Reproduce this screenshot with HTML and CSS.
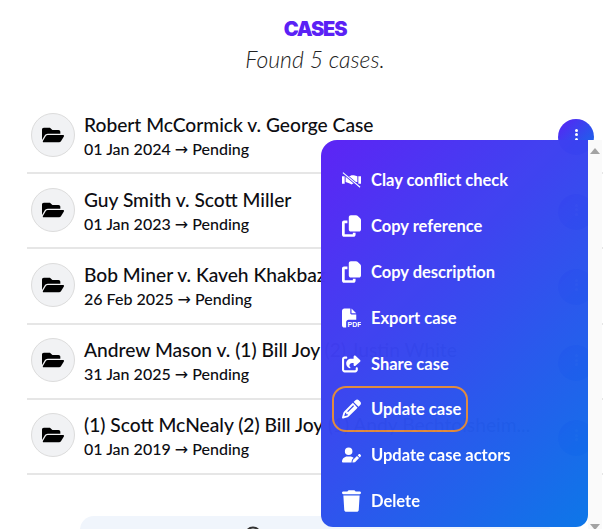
FILE: index.html
```html
<!DOCTYPE html>
<html lang="en">
<head>
<meta charset="utf-8">
<title>Cases</title>
<link rel="stylesheet" href="styles.css">
</head>
<body>
<svg class="defs" aria-hidden="true"><defs>
<symbol id="folder" viewBox="0 0 576 512"><path d="M572.694 292.093L500.27 416.248A63.997 63.997 0 0 1 444.989 448H45.025c-18.523 0-30.064-20.093-20.731-36.093l72.424-124.155A64 64 0 0 1 152 256h399.964c18.523 0 30.064 20.093 20.73 36.093zM152 224h328v-48c0-26.51-21.49-48-48-48H272l-64-64H48C21.49 64 0 85.49 0 112v278.046l69.077-118.418C86.214 242.25 117.989 224 152 224z"/></symbol>
<symbol id="copy" viewBox="0 0 448 512"><path d="M208 0H332.1c12.7 0 24.9 5.1 33.9 14.1l67.9 67.9c9 9 14.1 21.2 14.1 33.9V336c0 26.5-21.5 48-48 48H208c-26.5 0-48-21.5-48-48V48c0-26.5 21.5-48 48-48zM48 128h80v64H64V448H256V416h64v48c0 26.5-21.5 48-48 48H48c-26.5 0-48-21.5-48-48V176c0-26.5 21.5-48 48-48z"/></symbol>
</defs></svg>
<main class="page">
  <header class="head">
    <h1 class="title">CASES</h1>
    <p class="found">Found 5 cases.</p>
  </header>
  <ul class="rows">
    <li class="row">
      <span class="avatar"><svg class="folder"><use href="#folder"/></svg></span>
      <div class="info"><div class="name">Robert McCormick v. George Case</div><div class="meta">01 Jan 2024 <span class="arrow">→</span> Pending</div></div>
      <span class="more"><i></i><i></i><i></i></span>
    </li>
    <li class="row">
      <span class="avatar"><svg class="folder"><use href="#folder"/></svg></span>
      <div class="info"><div class="name">Guy Smith v. Scott Miller</div><div class="meta">01 Jan 2023 <span class="arrow">→</span> Pending</div></div>
      <span class="more"><i></i><i></i><i></i></span>
    </li>
    <li class="row">
      <span class="avatar"><svg class="folder"><use href="#folder"/></svg></span>
      <div class="info"><div class="name">Bob Miner v. Kaveh Khakbaz</div><div class="meta">26 Feb 2025 <span class="arrow">→</span> Pending</div></div>
      <span class="more"><i></i><i></i><i></i></span>
    </li>
    <li class="row">
      <span class="avatar"><svg class="folder"><use href="#folder"/></svg></span>
      <div class="info"><div class="name">Andrew Mason v. (1) Bill Joy (2) Justin White</div><div class="meta">31 Jan 2025 <span class="arrow">→</span> Pending</div></div>
      <span class="more"><i></i><i></i><i></i></span>
    </li>
    <li class="row">
      <span class="avatar"><svg class="folder"><use href="#folder"/></svg></span>
      <div class="info"><div class="name">(1) Scott McNealy (2) Bill Joy (1) Andy Bechtolsheim...</div><div class="meta">01 Jan 2019 <span class="arrow">→</span> Pending</div></div>
      <span class="more"><i></i><i></i><i></i></span>
    </li>
  </ul>
  <div class="loader"><svg class="loader-icon" viewBox="0 0 20 20"><circle cx="10" cy="10" r="7.5"/></svg></div>
</main>
<div class="popup">
  <nav class="menu">
    <a class="item"><svg class="ico" viewBox="0 0 640 512"><path d="M0 128h90v256H0zM550 128h90v256h-90zM122 128h136l62-32h80l118 32v192h-58L320 404l-60-30-138-54z"/><path class="gap" d="M30 10L610 500"/><path class="slash" d="M30 10L610 500"/></svg><span>Clay conflict check</span></a>
    <a class="item"><svg class="ico"><use href="#copy"/></svg><span>Copy reference</span></a>
    <a class="item"><svg class="ico"><use href="#copy"/></svg><span>Copy description</span></a>
    <a class="item"><svg class="ico" viewBox="0 0 512 512"><path d="M0 64C0 28.7 28.7 0 64 0H224V128c0 17.7 14.3 32 32 32H384V304H176c-35.3 0-64 28.7-64 64V512H64c-35.3 0-64-28.7-64-64V64zm384 64H256V0L384 128z"/><text class="pdf" x="150" y="500">PDF</text></svg><span>Export case</span></a>
    <a class="item"><svg class="ico" viewBox="0 0 576 512"><path d="M352 224H305.5c-45 0-81.5 36.5-81.5 81.5c0 22.3 10.3 34.3 19.2 40.5c6.8 4.7 12.8 12 12.8 20.3c0 9.8-8 17.8-17.8 17.8h-2.5c-2.4 0-4.8-.4-7.1-1.4C210.8 374.8 128 333.4 128 240c0-79.5 64.5-144 144-144h80V34.7C352 15.5 367.5 0 386.7 0c8.6 0 16.8 3.2 23.2 8.9L548.1 133.3c7.6 6.8 11.9 16.5 11.9 26.7s-4.3 19.9-11.9 26.7l-139 125.1c-5.9 5.3-13.5 8.2-21.4 8.2H384c-17.7 0-32-14.3-32-32V224zM80 96c-8.8 0-16 7.2-16 16V432c0 8.8 7.2 16 16 16H400c8.8 0 16-7.2 16-16V384c0-17.7 14.3-32 32-32s32 14.3 32 32v48c0 44.2-35.8 80-80 80H80c-44.2 0-80-35.8-80-80V112C0 67.8 35.8 32 80 32h48c17.7 0 32 14.3 32 32s-14.3 32-32 32H80z"/></svg><span>Share case</span></a>
    <a class="item focus"><svg class="ico" viewBox="0 0 512 512"><path d="M410.3 231l11.3-11.3-33.9-33.9-62.1-62.1L291.7 89.8l-11.3 11.3-22.6 22.6L58.6 322.9c-10.4 10.4-18 23.3-22.2 37.4L1 480.7c-2.5 8.4-.2 17.5 6.1 23.7s15.3 8.5 23.7 6.1l120.3-35.4c14.1-4.2 27-11.8 37.4-22.2L387.7 253.7 410.3 231zM160 399.4l-9.1 22.7c-4 3.1-8.5 5.4-13.3 6.9L59.4 452l23-78.1c1.4-4.9 3.8-9.4 6.9-13.3l22.7-9.1v32c0 8.8 7.2 16 16 16h32zM362.7 18.7L348.3 33.2 325.7 55.8 314.3 67.1l33.9 33.9 62.1 62.1 33.9 33.9 11.3-11.3 22.6-22.6 14.5-14.5c25-25 25-65.5 0-90.5L453.3 18.7c-25-25-65.5-25-90.5 0zm-47.4 168l-144 144c-6.2 6.2-16.4 6.2-22.6 0s-6.2-16.4 0-22.6l144-144c6.2-6.2 16.4-6.2 22.6 0s6.2 16.4 0 22.6z"/></svg><span>Update case</span></a>
    <a class="item"><svg class="ico" viewBox="0 0 640 512"><path d="M224 256A128 128 0 1 0 224 0a128 128 0 1 0 0 256zm-45.7 48C79.8 304 0 383.8 0 482.3C0 498.7 13.3 512 29.7 512H322.8c-3.1-8.8-3.7-18.4-1.4-27.8l15-60.1c2.8-11.3 8.6-21.5 16.8-29.7l40.3-40.3c-32.1-31-75.7-50.1-123.9-50.1H178.3zm435.5-68.3c-15.6-15.6-40.9-15.6-56.6 0l-29.4 29.4 71 71 29.4-29.4c15.6-15.6 15.6-40.9 0-56.6l-14.4-14.4zM375.9 417c-4.1 4.1-7 9.2-8.4 14.9l-15 60.1c-1.4 5.5 .2 11.2 4.2 15.2s9.7 5.6 15.2 4.2l60.1-15c5.6-1.4 10.8-4.3 14.9-8.4L576.1 358.7l-71-71L375.9 417z"/></svg><span>Update case actors</span></a>
    <a class="item"><svg class="ico" viewBox="0 0 448 512"><path d="M135.2 17.7L128 32H32C14.3 32 0 46.3 0 64S14.3 96 32 96H416c17.7 0 32-14.3 32-32s-14.3-32-32-32H320l-7.2-14.3C307.4 6.8 296.3 0 284.2 0H163.8c-12.1 0-23.2 6.8-28.6 17.7zM416 128H32L53.2 467c1.6 25.3 22.6 45 47.9 45H346.9c25.3 0 46.3-19.7 47.9-45L416 128z"/></svg><span>Delete</span></a>
  </nav>
  <div class="track"><b class="up"></b><b class="down"></b></div>
</div>
</body>
</html>
```
FILE: styles.css
```css
* { box-sizing: border-box; }
html, body { margin: 0; height: 529px; overflow: hidden; background: #fff; }
body { position: relative; font-family: Lato, "Liberation Sans", sans-serif; color: #0d0d12; }
.defs { display: none; }

.page { height: 529px; overflow: hidden; padding: 18px 8px 0 27px; }
.head { text-align: center; }
.title { margin: 0; font: 900 20px/22px Inter, sans-serif; letter-spacing: -1.2px; color: #5b21f5; }
.found { margin: 5px 0 0; font: italic 300 23px/28px Lato, sans-serif; color: #222; }

.rows { list-style: none; margin: 26px 0 0; padding: 0; }
.row { display: flex; align-items: center; height: 75.2px; padding: 0 0 2px 4px; border-bottom: 2px solid #e6e6e6; }
.avatar { flex: none; width: 44px; height: 44px; border-radius: 50%; background: #f1f2f4; border: 1px solid #dcdcdc; display: flex; align-items: center; justify-content: center; }
.folder { width: 22px; height: 20px; fill: #000; }
.info { flex: 1; min-width: 0; margin-left: 9px; padding-top: 3px; white-space: nowrap; }
.name { font-size: 19.2px; line-height: 25px; font-weight: 500; }
.meta { font-size: 16px; line-height: 22px; font-weight: 500; margin-top: 1px; }
.arrow { font-family: "DejaVu Sans", sans-serif; font-size: 16px; }
.more { flex: none; width: 36px; height: 36px; margin: 5px 9px 0 0; padding-bottom: 5px; border-radius: 50%; background: linear-gradient(135deg, #5b21f5, #0f6fe8); display: flex; flex-direction: column; align-items: center; justify-content: center; gap: 1.5px; }
.more i { width: 3px; height: 3px; border-radius: 50%; background: #fff; }

.loader { margin: 41px 53px 0; height: 60px; border-radius: 14px; background: #f0f5fc; padding: 9px 0 0 163px; }
.loader-icon { display: block; width: 20px; height: 20px; fill: none; stroke: #333; stroke-width: 2; }

.popup { position: absolute; left: 321px; top: 140px; width: 281px; height: 389px; display: flex; }
.menu { flex: none; width: 267px; height: 387px; padding: 17.5px 0 0 11px; border-radius: 16px 0 12px 12px; background: linear-gradient(135deg, #5b21f5 0%, #0a75e8 100%); opacity: .985; display: flex; flex-direction: column; align-items: flex-start; color: #fff; }
.item { display: flex; align-items: center; height: 45.8px; padding: 0 5px 0 8px; border: 2px solid transparent; border-radius: 14px; font-size: 16.5px; font-weight: 700; color: #fff; white-space: nowrap; }
.item span { margin-left: 10px; }
.focus { border-color: #e08a3c; }
.ico { flex: none; width: 19px; height: 22px; fill: #fff; }
.ico .gap { fill: none; stroke: #4a33ef; stroke-width: 90; }
.ico .slash { fill: none; stroke: #fff; stroke-width: 36; }
.pdf { font: 700 190px "Liberation Sans", sans-serif; fill: #fff; }
.track { flex: 1; position: relative; background: #fafafa; }
.track b { position: absolute; left: 2px; border: 5px solid transparent; }
.up { top: 8px; border-bottom: 6px solid #a3a3a3 !important; border-top-width: 0 !important; }
.down { top: 384px; border-top: 6px solid #a3a3a3 !important; border-bottom-width: 0 !important; }
```
